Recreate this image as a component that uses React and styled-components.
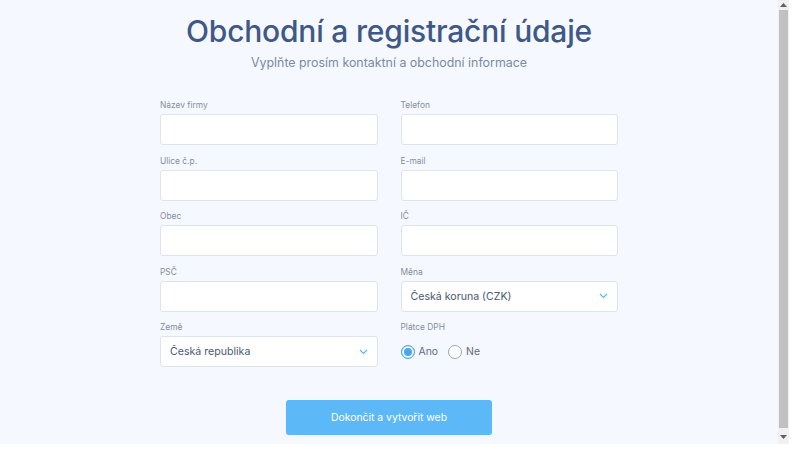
import React from 'react';
import styled, { createGlobalStyle } from 'styled-components';

const GlobalStyle = createGlobalStyle`
  html, body {
    margin: 0;
    background: #fff;
  }
  body {
    font-family: Inter, "Noto Sans", "Liberation Sans", sans-serif;
  }
`;

const Window = styled.div`
  width: 789px;
  height: 444px;
  display: flex;
  background: #f5f9ff;
  overflow: hidden;
`;

const Page = styled.main`
  flex: 1;
  box-sizing: border-box;
  padding-top: 13px;
  display: flex;
  flex-direction: column;
  align-items: center;
`;

const ScrollBar = styled.div`
  width: 11px;
  flex: none;
  display: flex;
  flex-direction: column;
  background: #f1f1f1;
`;

const ScrollArrow = styled.div`
  height: ${(p) => p.$h}px;
  display: flex;
  align-items: center;
  justify-content: center;
`;

const Thumb = styled.div`
  flex: 1;
  margin: 0 1px 1px 1px;
  background: #c1c1c1;
`;

const Title = styled.h1`
  margin: 0;
  font-size: 30px;
  line-height: 36px;
  font-weight: 500;
  color: #3f5886;
  letter-spacing: -0.2px;
`;

const Subtitle = styled.p`
  margin: 4.5px 0 0;
  font-size: 12.4px;
  line-height: 18px;
  color: #7a89a5;
`;

const Form = styled.form`
  margin-top: 27.5px;
  width: 458px;
  display: grid;
  grid-template-columns: 1fr 1fr;
  column-gap: 23px;
  row-gap: 9.5px;
`;

const Field = styled.div`
  display: flex;
  flex-direction: column;
`;

const Label = styled.label`
  font-size: 8.4px;
  line-height: 12px;
  color: #838d9e;
  margin-bottom: 3px;
`;

const Input = styled.input`
  box-sizing: border-box;
  height: 31px;
  width: 100%;
  border: 1px solid #dde4ee;
  border-radius: 3px;
  background: #fff;
  padding: 0 10px;
  font: inherit;
  font-size: 10.6px;
  color: #4b5873;
  outline: none;
`;

const SelectBox = styled.div`
  box-sizing: border-box;
  height: 31px;
  display: flex;
  align-items: center;
  border: 1px solid #dde4ee;
  border-radius: 3px;
  background: #fff;
  padding: 0 9px 0 0;

  svg {
    flex: none;
  }
`;

const Select = styled.select`
  flex: 1;
  appearance: none;
  border: none;
  background: transparent;
  height: 100%;
  padding: 0 9px;
  font: inherit;
  font-size: 10.6px;
  color: #4b5873;
  outline: none;
`;

const RadioRow = styled.div`
  height: 31px;
  display: flex;
  align-items: center;
  gap: 10px;
`;

const RadioOption = styled.label`
  display: flex;
  align-items: center;
  gap: 4px;
  font-size: 10.4px;
  color: #5d6a82;
`;

const Radio = styled.input.attrs({ type: 'radio' })`
  appearance: none;
  margin: 0;
  width: 14px;
  height: 14px;
  box-sizing: border-box;
  border-radius: 50%;
  border: 1.5px solid #9aa5b8;
  background: #fff;

  &:checked {
    border-color: #4aa6ee;
    background: #4aa6ee;
    box-shadow: inset 0 0 0 2px #fff;
  }
`;

const Submit = styled.button`
  margin-top: 33px;
  width: 206px;
  height: 35px;
  border: none;
  border-radius: 3px;
  background: #5cb8f6;
  color: #fff;
  font: inherit;
  font-size: 10.4px;
  font-weight: 400;
`;

const Chevron = () => (
  <svg width="9" height="6" viewBox="0 0 9 6" fill="none">
    <path d="M1 1l3.5 3.5L8 1" stroke="#5cb8f6" strokeWidth="1.2" />
  </svg>
);

const Arrow = ({ down }) => (
  <svg width="7" height="4" viewBox="0 0 7 4">
    <path d={down ? 'M0 0h7L3.5 4z' : 'M0 4h7L3.5 0z'} fill="#606060" />
  </svg>
);

function TextField({ label }) {
  return (
    <Field>
      <Label>{label}</Label>
      <Input type="text" />
    </Field>
  );
}

function SelectField({ label, value }) {
  return (
    <Field>
      <Label>{label}</Label>
      <SelectBox>
        <Select defaultValue={value}>
          <option>{value}</option>
        </Select>
        <Chevron />
      </SelectBox>
    </Field>
  );
}

export default function App() {
  return (
    <>
      <GlobalStyle />
      <Window>
        <Page>
          <Title>Obchodní a registrační údaje</Title>
          <Subtitle>Vyplňte prosím kontaktní a obchodní informace</Subtitle>
          <Form>
            <TextField label="Název firmy" />
            <TextField label="Telefon" />
            <TextField label="Ulice č.p." />
            <TextField label="E-mail" />
            <TextField label="Obec" />
            <TextField label="IČ" />
            <TextField label="PSČ" />
            <SelectField label="Měna" value="Česká koruna (CZK)" />
            <SelectField label="Země" value="Česká republika" />
            <Field>
              <Label>Plátce DPH</Label>
              <RadioRow>
                <RadioOption>
                  <Radio name="dph" defaultChecked />
                  Ano
                </RadioOption>
                <RadioOption>
                  <Radio name="dph" />
                  Ne
                </RadioOption>
              </RadioRow>
            </Field>
          </Form>
          <Submit type="button">Dokončit a vytvořit web</Submit>
        </Page>
        <ScrollBar>
          <ScrollArrow $h={10}>
            <Arrow />
          </ScrollArrow>
          <Thumb />
          <ScrollArrow $h={15}>
            <Arrow down />
          </ScrollArrow>
        </ScrollBar>
      </Window>
    </>
  );
}
